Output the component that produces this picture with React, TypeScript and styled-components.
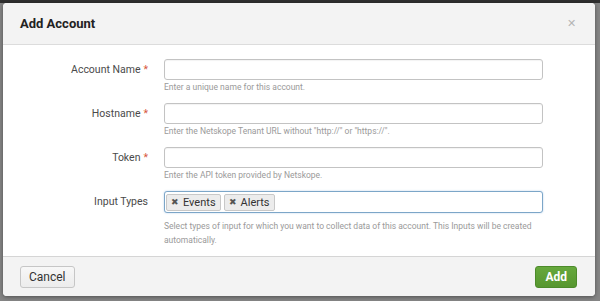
import styled, { createGlobalStyle } from "styled-components"

const Global = createGlobalStyle`
    html, body {
        margin: 0;
        padding: 0;
        width: 600px;
        height: 301px;
        overflow: hidden;
        background: #8a8a8a;
        font-family: Roboto, "Liberation Sans", sans-serif;
    }
`
const Backdrop = styled.div`
    width: 600px;
    height: 301px;
    box-sizing: border-box;
    padding: 3px 5px 5px 3px;
    background: linear-gradient(#2f2f2f 0 3px, #858585 3px);
`
const Modal = styled.div`
    width: 592px;
    height: 293px;
    background: #fff;
    border-radius: 4px;
    overflow: hidden;
    display: flex;
    flex-direction: column;
    box-shadow: 0 1px 4px rgba(0, 0, 0, 0.4);
`
const Header = styled.div`
    height: 41px;
    background: #f3f3f3;
    border-bottom: 1px solid #dcdcdc;
    display: flex;
    align-items: center;
    justify-content: space-between;
    padding: 0 19px 0 17px;
`
const Title = styled.div`
    font-size: 13px;
    font-weight: bold;
    color: #222;
`
const Close = styled.div`
    font-size: 11px;
    color: #b5b5b5;
    line-height: 1;
`
const Body = styled.div`
    flex: 1;
    padding-top: 14px;
    display: flex;
    flex-direction: column;
    gap: 9px;
`
const Row = styled.div`
    display: grid;
    grid-template-columns: 145px 379px;
    column-gap: 16px;
    align-items: start;
`
const Label = styled.div`
    text-align: right;
    font-size: 10.5px;
    color: #4a4a4a;
    line-height: 22px;
`
const Star = styled.span`
    color: #d6563c;
    margin-left: 3px;
`
const Field = styled.div`
    display: flex;
    flex-direction: column;
`
const Input = styled.div<{ $focus?: boolean }>`
    height: ${p => (p.$focus ? 22 : 21)}px;
    box-sizing: border-box;
    border: 1px solid ${p => (p.$focus ? "#7ca6c8" : "#c3c3c3")};
    border-radius: 3px;
    background: #fff;
    display: flex;
    align-items: center;
    gap: 3px;
    padding-left: 1px;
    box-shadow: ${p => (p.$focus ? "0 0 2px rgba(80, 140, 200, 0.4)" : "inset 0 1px 1px rgba(0,0,0,0.05)")};
`
const Chip = styled.div`
    height: 17px;
    box-sizing: border-box;
    border: 1px solid #c8c8c8;
    background: #ececec;
    border-radius: 2px;
    font-size: 11px;
    color: #333;
    display: flex;
    align-items: center;
    padding: 0 4px 0 4px;
    gap: 4px;
`
const ChipX = styled.span`
    font-size: 9px;
    color: #555;
`
const Help = styled.div<{ $gap?: number }>`
    font-size: 8.5px;
    color: #9a9a9a;
    line-height: 14px;
    margin-top: ${p => p.$gap ?? 0}px;
`
const Footer = styled.div`
    height: 39px;
    border-top: 1px solid #d5d5d5;
    background: #f3f3f3;
    display: flex;
    align-items: center;
    justify-content: space-between;
    padding: 0 18px 0 17px;
`
const Button = styled.div<{ $primary?: boolean }>`
    height: 22px;
    box-sizing: border-box;
    padding: 0 ${p => (p.$primary ? 9 : 8)}px;
    border-radius: 3px;
    font-size: 12px;
    display: flex;
    align-items: center;
    border: 1px solid ${p => (p.$primary ? "#4c8a2a" : "#c6c6c6")};
    background: ${p => (p.$primary ? "linear-gradient(#66a83c, #56962f)" : "linear-gradient(#f7f7f7, #ececec)")};
    color: ${p => (p.$primary ? "#fff" : "#333")};
    font-weight: ${p => (p.$primary ? "bold" : "normal")};
`

const fields = [
    { label: "Account Name", help: "Enter a unique name for this account." },
    { label: "Hostname", help: 'Enter the Netskope Tenant URL without "http://" or "https://".' },
    { label: "Token", help: "Enter the API token provided by Netskope." },
]

const App = () => {
    return <Backdrop>
        <Global />
        <Modal>
            <Header>
                <Title>Add Account</Title>
                <Close>✕</Close>
            </Header>
            <Body>
                {fields.map(f => (
                    <Row key={f.label}>
                        <Label>{f.label}<Star>*</Star></Label>
                        <Field>
                            <Input />
                            <Help>{f.help}</Help>
                        </Field>
                    </Row>
                ))}
                <Row>
                    <Label>Input Types</Label>
                    <Field>
                        <Input $focus>
                            <Chip><ChipX>✖</ChipX>Events</Chip>
                            <Chip><ChipX>✖</ChipX>Alerts</Chip>
                        </Input>
                        <Help $gap={6}>Select types of input for which you want to collect data of this account. This Inputs will be created automatically.</Help>
                    </Field>
                </Row>
            </Body>
            <Footer>
                <Button>Cancel</Button>
                <Button $primary>Add</Button>
            </Footer>
        </Modal>
    </Backdrop>
}

export default App
